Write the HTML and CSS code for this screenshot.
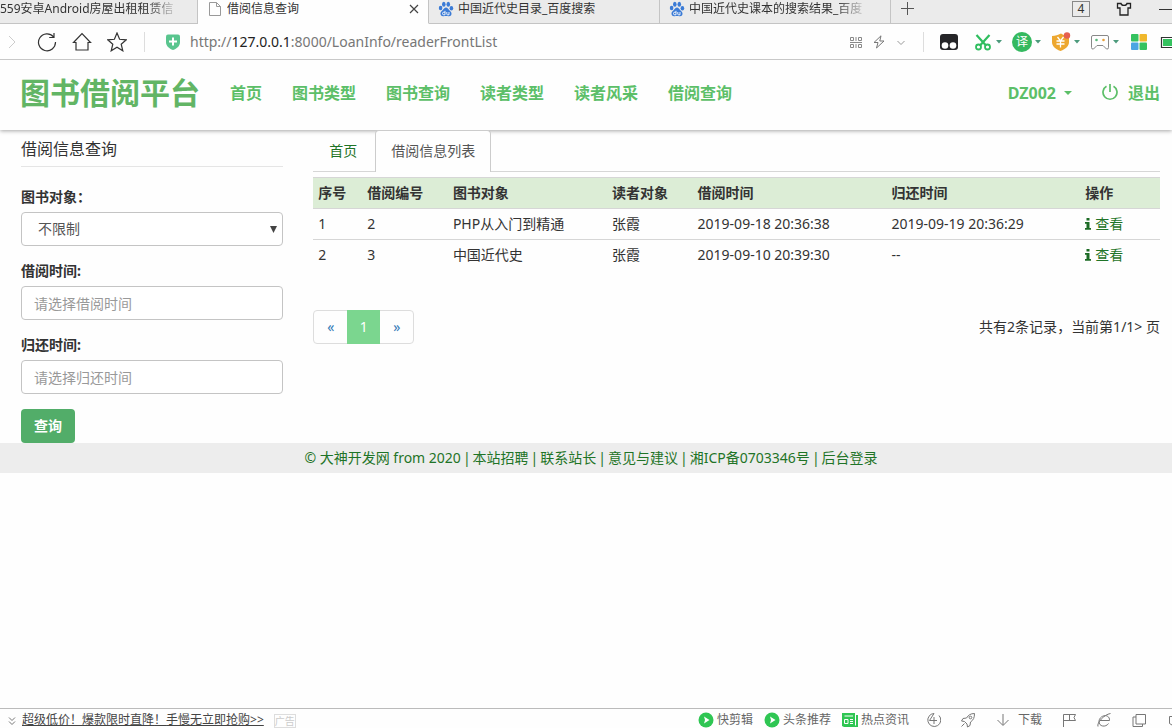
FILE: index.html
```html
<!DOCTYPE html>
<html lang="zh-CN">
<head>
<meta charset="utf-8">
<title>借阅信息查询</title>
<link rel="stylesheet" href="styles.css">
</head>
<body>
<svg class="defs" aria-hidden="true">
  <symbol id="paw" viewBox="0 0 16 16">
    <g fill="#3b7bd6"><ellipse cx="2.6" cy="7" rx="1.8" ry="2.3"/><ellipse cx="5.8" cy="3.3" rx="1.8" ry="2.5"/><ellipse cx="10.3" cy="3.3" rx="1.8" ry="2.5"/><ellipse cx="13.4" cy="7.2" rx="1.8" ry="2.3"/><path d="M8 6.600c-1.700 0-2.200 1.500-3.400 2.700C3.300 10.500 2.300 11.400 2.500 13c.3 1.900 1.700 2.400 3 2.200 1.700-.3 3.300-.3 5 0 1.500.2 2.800-.4 3-2.200.2-1.600-1-2.500-2.200-3.700C10.200 8.100 9.700 6.600 8 6.600z"/></g>
    <path d="M7 9.800v4H5.800a1.300 1.300 0 0 1 0-2.600H7M8.800 11v2.200c0 .4.300.6.700.6H11V11" fill="none" stroke="#fff" stroke-width=".9"/>
  </symbol>
  <symbol id="caret" viewBox="0 0 6 4"><path d="M0 0h6L3 3.500z" fill="#4c9a7c"/></symbol>
  <symbol id="play" viewBox="0 0 16 16"><circle cx="8" cy="8" r="7.500" fill="#2fc653"/><path d="M6 4.500 11.500 8 6 11.500 7 8z" fill="#fff"/></symbol>
  <symbol id="info" viewBox="0 0 6 12"><path d="M1.500 0h3v2.500h-3zM0 4h4.500v6H6v1.800H0V10h1.500V5.700H0z" fill="#1c6b25"/></symbol>
</svg>

<div class="tabstrip">
  <div class="tab tab-first"><span>559安卓Android房屋出租租赁信</span></div>
  <div class="tab tab-current">
    <svg class="i16" viewBox="0 0 16 16"><path d="M2.500 1.500h7l4 4v9h-11zM9.500 1.500v4h4" fill="none" stroke="#999"/></svg>
    <span>借阅信息查询</span>
    <button class="tab-close" aria-label="关闭"><svg width="10" height="10" viewBox="0 0 10 10"><path d="M1 1l8 8M9 1 1 9" stroke="#444" stroke-width="1.200"/></svg></button>
  </div>
  <div class="tab"><svg class="i16"><use href="#paw"/></svg><span>中国近代史目录_百度搜索</span></div>
  <div class="tab tab-fade"><svg class="i16"><use href="#paw"/></svg><span>中国近代史课本的搜索结果_百度</span></div>
  <button class="tab-add" aria-label="新标签"><svg width="14" height="14" viewBox="0 0 14 14"><path d="M6.500 0v13M0 6.500h13" stroke="#555"/></svg></button>
  <div class="window-tools">
    <span class="count">4</span>
    <svg width="16" height="14" viewBox="0 0 16 14"><path d="M5 1.500H1.500v4.500H4v7h8V6h2.500V1.500H11C10.500 4 5.500 4 5 1.500z" fill="none" stroke="#222" stroke-width="1.300"/></svg>
    <svg width="14" height="14" viewBox="0 0 14 14"><path d="M1 7.500h13" stroke="#333"/></svg>
  </div>
</div>

<div class="toolbar">
  <div class="nav-tools">
    <svg class="i20" viewBox="0 0 20 20"><path d="M7 4l6 6-6 6" fill="none" stroke="#ccc"/></svg>
    <svg class="i20" viewBox="0 0 20 20"><path d="M16.500 4.800A8.500 8.500 0 1 0 18.500 10M17 1v4.500h-4.800" fill="none" stroke="#333" stroke-width="1.200"/></svg>
    <svg class="i20" viewBox="0 0 20 20"><path d="M1.500 10.500 10 1.500l8.500 9H16V18H4v-7.500z" fill="none" stroke="#333" stroke-width="1.200"/></svg>
    <svg class="i20" viewBox="0 0 20 20"><path d="M10 1l2.600 6.300 6.700.5-5.100 4.400 1.600 6.600L10 15.200l-5.800 3.600 1.600-6.600L.7 7.800l6.700-.5z" fill="none" stroke="#333" stroke-width="1.200"/></svg>
  </div>
  <span class="divider"></span>
  <svg class="i16" viewBox="0 0 16 16"><path d="M3 .5h10q2 0 2 2V8c0 4-3 6.500-7 8-4-1.500-7-4-7-8V2.500q0-2 2-2z" fill="#59c58e"/><path d="M8 3.500v8M4 7.500h8" stroke="#fff" stroke-width="2"/></svg>
  <div class="address">http://<b>127.0.0.1</b>:8000/LoanInfo/readerFrontList</div>
  <div class="page-tools">
    <svg width="12" height="12" viewBox="0 0 12 12"><path d="M.5 1.500h3v3h-3zM8.500 1.500h3v3h-3zM.5 8.500h3v3h-3zM8.500 8.500h3v3h-3zM6 1v4M0 6.500h12M6 8v4" fill="none" stroke="#888"/></svg>
    <svg width="12" height="14" viewBox="0 0 12 14"><path d="M8 .8 1 7.500h4L3.500 13l7.500-7H6.800z" fill="none" stroke="#777"/></svg>
    <svg width="10" height="10" viewBox="0 0 10 10"><path d="M1.500 4 5 7.500 8.500 4" fill="none" stroke="#999"/></svg>
  </div>
  <span class="divider divider-end"></span>
  <div class="extensions">
    <svg class="i20 ext-first" viewBox="0 0 20 20"><rect x="1" y="2" width="18" height="16" rx="3" fill="#252528"/><circle cx="6" cy="13.500" r="3.300" fill="#fff"/><circle cx="14" cy="13.500" r="3.300" fill="#fff"/></svg>
    <span class="ext"><svg class="i20" viewBox="0 0 20 20"><path d="M3.500 3l9.500 10.500M16.500 3 7 13.500" stroke="#2fbe5f" stroke-width="2.200"/><g fill="none" stroke="#2fbe5f" stroke-width="1.800"><circle cx="5.500" cy="15" r="2.500"/><circle cx="14.500" cy="15" r="2.500"/></g></svg><svg class="caret"><use href="#caret"/></svg></span>
    <span class="ext"><span class="translate">译</span><svg class="caret"><use href="#caret"/></svg></span>
    <span class="ext"><svg class="i20" viewBox="0 0 20 20"><path d="M1 4c3.500 0 6-1 9-2.500C12 3 15 4 18 4v6c0 4-3 7-8.500 9C4 17 1 14 1 10z" fill="#eda72f"/><path d="M6.500 5 9.500 9l3-4M5.500 9h8M5.500 12h8M9.500 9v6.500" fill="none" stroke="#fff" stroke-width="1.300"/><circle cx="16" cy="3.500" r="3.200" fill="#e5604f"/></svg><svg class="caret"><use href="#caret"/></svg></span>
    <span class="ext"><svg class="i20" viewBox="0 0 20 20"><path d="M3 3.500h14q1.500 0 1.500 1.500v10.500q0 2-2 1.500L13 13.500H7L3.500 17q-2 .5-2-1.500V5Q1.500 3.500 3 3.500z" fill="none" stroke="#888"/><circle cx="6.500" cy="8" r="1.300" fill="#58b878"/><circle cx="13.500" cy="8" r="1.300" fill="#e8a13c"/></svg><svg class="caret"><use href="#caret"/></svg></span>
    <svg class="i20" viewBox="0 0 20 20"><rect x="2" y="2" width="7.500" height="7.500" rx="1" fill="#35c25f"/><rect x="10.500" y="2" width="7.500" height="7.500" rx="1" fill="#f0b82c"/><rect x="2" y="10.500" width="7.500" height="7.500" rx="1" fill="#4ba5e2"/><rect x="10.500" y="10.500" width="7.500" height="7.500" rx="1" fill="#35c25f"/></svg>
    <svg width="13" height="20" viewBox="0 0 13 20"><path d="M14 5.500H2.500v10H14" fill="none" stroke="#333" stroke-width="1.200"/><path d="M4 7h9v7H4z" fill="#35c25f"/></svg>
  </div>
</div>

<div class="page">
  <header class="site-header">
    <a class="brand" href="#">图书借阅平台</a>
    <nav class="site-nav">
      <a href="#">首页</a><a href="#">图书类型</a><a href="#">图书查询</a><a href="#">读者类型</a><a href="#">读者风采</a><a href="#">借阅查询</a>
    </nav>
    <nav class="site-nav user-nav">
      <a href="#">DZ002 <svg width="8" height="4" viewBox="0 0 8 4"><path d="M0 0h8L4 4z" fill="currentColor"/></svg></a>
      <a href="#"><svg width="16" height="18" viewBox="0 0 16 18"><path d="M8 0v8M4.500 2.200a7 7 0 1 0 7 0" fill="none" stroke="currentColor" stroke-width="1.700"/></svg>退出</a>
    </nav>
  </header>

  <div class="content">
    <aside class="search">
      <h1>借阅信息查询</h1>
      <form>
        <label for="book">图书对象<span class="punct">：</span></label>
        <div class="select-wrap">
          <select id="book" class="field"><option>不限制</option></select>
          <svg class="select-arrow" viewBox="0 0 7 7"><path d="M0 0h7L3.500 7z" fill="#444"/></svg>
        </div>
        <label for="loan">借阅时间:</label>
        <input id="loan" class="field" type="text" placeholder="请选择借阅时间">
        <label for="back">归还时间:</label>
        <input id="back" class="field" type="text" placeholder="请选择归还时间">
        <button class="submit" type="button">查询</button>
      </form>
    </aside>

    <main class="results">
      <nav class="page-tabs"><a href="#">首页</a><a class="active" href="#">借阅信息列表</a></nav>
      <table>
        <colgroup><col class="c-no"><col class="c-id"><col class="c-book"><col class="c-id"><col class="c-time"><col class="c-time"><col class="c-act"></colgroup>
        <thead><tr><th>序号</th><th>借阅编号</th><th>图书对象</th><th>读者对象</th><th>借阅时间</th><th>归还时间</th><th>操作</th></tr></thead>
        <tbody>
          <tr><td>1</td><td>2</td><td>PHP从入门到精通</td><td>张霞</td><td>2019-09-18 20:36:38</td><td>2019-09-19 20:36:29</td><td><a href="#"><svg class="info"><use href="#info"/></svg>查看</a></td></tr>
          <tr><td>2</td><td>3</td><td>中国近代史</td><td>张霞</td><td>2019-09-10 20:39:30</td><td>--</td><td><a href="#"><svg class="info"><use href="#info"/></svg>查看</a></td></tr>
        </tbody>
      </table>
      <div class="pager-row">
        <nav class="pager"><a href="#">«</a><a class="active" href="#">1</a><a href="#">»</a></nav>
        <p>共有2条记录<span class="punct">，</span>当前第1/1&gt; 页</p>
      </div>
    </main>
  </div>

  <footer class="site-footer"><span>© 大神开发网 from 2020</span><span>|</span><a href="#">本站招聘</a><span>|</span><a href="#">联系站长</a><span>|</span><a href="#">意见与建议</a><span>|</span><a href="#">湘ICP备0703346号</a><span>|</span><a href="#">后台登录</a></footer>
</div>

<div class="statusbar">
  <svg width="8" height="10" viewBox="0 0 8 10"><path d="M1 1.500l3 3 3-3M1 5.500l3 3 3-3" fill="none" stroke="#777"/></svg>
  <a class="promo" href="#">超级低价<span class="punct">！</span>爆款限时直降<span class="punct">！</span>手慢无立即抢购&gt;&gt;</a>
  <span class="ad">广告</span>
  <div class="shortcuts">
    <span><svg class="i16"><use href="#play"/></svg>快剪辑</span>
    <span><svg class="i16"><use href="#play"/></svg>头条推荐</span>
    <span><svg class="i16" viewBox="0 0 16 16"><path d="M0 1h13v2h3v12H2L0 14z" fill="#2fc653"/><path d="M2.500 4h8.500M2.500 7.500h3.500v4H2.500zM8 7.500h3M8 9.500h3M8 11.500h3M13.500 3v10.500" fill="none" stroke="#fff"/></svg>热点资讯</span>
  </div>
  <div class="status-icons">
    <svg class="i16" viewBox="0 0 16 16"><g fill="none" stroke="#777"><path d="M14 3.500A6.500 6.500 0 1 1 9 1.500L4.500 8.500H12"/><path d="M9 5v7"/></g></svg>
    <svg class="i16" viewBox="0 0 16 16"><path d="M14.500 1.500c-4 0-6 1.500-8 4.500L3 6.500 1.500 9l3 .5 2.500 2.500.5 3L10 13.500l.5-3.500c3-2 4-4.500 4-8.500zM4.500 11.500l-3 3" fill="none" stroke="#777"/><circle cx="10.500" cy="5.500" r="1.300" fill="none" stroke="#777"/></svg>
    <span><svg class="i16" viewBox="0 0 16 16"><path d="M8 2v11M2.500 8 8 13.500 13.500 8" fill="none" stroke="#777"/></svg>下载</span>
    <svg class="i16" viewBox="0 0 16 16"><path d="M2.500 15V2.500h12l-1.500 3 1.500 3h-12M8.500 2.500v6" fill="none" stroke="#777"/></svg>
    <svg class="i16" viewBox="0 0 16 16"><path d="M4 8.500h9.500c.5-7-9.500-6-10.500.5-.5 6 7 6.500 9.500 2.500M2 14.500C.5 11 8 2.500 14.500 1.500" fill="none" stroke="#777"/></svg>
    <svg class="i16" viewBox="0 0 16 16"><path d="M5 2.500h9.500V12H5zM5 5H2v9.500h9.500V12" fill="none" stroke="#777"/></svg>
    <svg width="6" height="14" viewBox="0 0 6 14"><path d="M6 3.500H3.500v7L6 12" fill="none" stroke="#777"/></svg>
  </div>
</div>
</body>
</html>
```

FILE: styles.css
```css
* { box-sizing: border-box; }
body {
  margin: 0;
  height: 100vh;
  display: flex;
  flex-direction: column;
  overflow: hidden;
  background: #fefefe;
  color: #333;
  font: 14px/20px "Noto Sans", "Noto Sans CJK SC", sans-serif;
}
a { color: #1f7427; text-decoration: none; }
button { border: 0; background: none; padding: 0; font: inherit; }
svg { flex: none; }
.defs { display: none; }
.i16 { width: 16px; height: 16px; }
.i20 { width: 20px; height: 20px; }
/* Full-width punctuation centred in its cell */
.punct { font-family: "Noto Sans CJK TC", sans-serif; line-height: 1; }

/* Browser tabs */
.tabstrip {
  display: flex;
  flex: none;
  background: #ebebeb;
  font-size: 12px;
  line-height: 18px;
}
.tab {
  display: flex;
  align-items: center;
  gap: 4px;
  flex: 0 1 231px;
  min-width: 0;
  padding: 0 9px 5px;
  border-right: 1px solid #c4c4c4;
  border-bottom: 1px solid #c4c4c4;
  white-space: nowrap;
  overflow: hidden;
}
.tab span { overflow: hidden; }
.tab-first { flex-basis: 198px; padding-left: 0; }
.tab-first span, .tab-fade span {
  mask-image: linear-gradient(to right, #000 85%, rgba(0, 0, 0, .2));
}
.tab-current { background: #fefefe; border-bottom-color: #fefefe; }
.tab-close { display: flex; margin-left: auto; }
.tab-add { padding: 0 10px 5px; line-height: 0; border-bottom: 1px solid #c4c4c4; }
.window-tools {
  display: flex;
  flex: 1;
  justify-content: flex-end;
  align-items: center;
  gap: 26px;
  padding-bottom: 5px;
  border-bottom: 1px solid #c4c4c4;
}
.count { width: 18px; border: 1px solid #888; line-height: 14px; text-align: center; }

/* Browser toolbar */
.toolbar {
  display: flex;
  align-items: center;
  flex: none;
  height: 36px;
  padding-left: 2px;
  border-bottom: 1px solid #c8c8c8;
}
.nav-tools { display: flex; gap: 15px; }
.divider { width: 1px; height: 20px; margin: 0 20px 0 17px; background: #ddd; }
.divider-end { margin: 0 15px 0 17px; }
.address { flex: 1; margin-left: 9px; color: #777; }
.address b { color: #222; font-weight: 400; }
.page-tools { display: flex; align-items: center; gap: 11px; }
.extensions { display: flex; align-items: center; gap: 10px; }
.ext-first { margin-right: 4px; }
.ext { display: flex; align-items: center; gap: 3px; }
.caret { width: 6px; height: 4px; }
.translate {
  width: 20px;
  border-radius: 50%;
  background: #35b960;
  color: #fff;
  font-size: 12px;
  text-align: center;
}

/* Site header */
.page { flex: 1; min-height: 0; overflow: hidden; }
.site-header {
  display: flex;
  align-items: center;
  height: 70px;
  padding: 0 12px 5px 20px;
  box-shadow: 0 1px 4px rgba(0, 0, 0, .35);
}
.brand { margin-right: 30px; color: #62b565; font-size: 30px; font-weight: 700; line-height: 40px; }
.site-nav { display: flex; gap: 30px; font-size: 16px; font-weight: 700; }
.site-nav a { display: flex; align-items: center; gap: 8px; color: #5cbf68; }
.user-nav { margin-left: auto; }
.user-nav a:last-child { gap: 10px; }

.content {
  display: grid;
  grid-template-columns: repeat(12, 1fr);
  column-gap: 30px;
  padding: 0 12px 0 21px;
}

/* Search form */
.search { grid-column: span 3; }
.search h1 {
  margin: 0 0 20px;
  padding: 9px 0 7px;
  border-bottom: 1px solid #e5e5e5;
  font-size: 16px;
  font-weight: 400;
}
.search label { display: block; margin-bottom: 5px; font-weight: 700; }
.field {
  display: block;
  width: 100%;
  height: 34px;
  margin-bottom: 15px;
  padding: 6px 12px;
  border: 1px solid #c4c4c4;
  border-radius: 4px;
  background: #fff;
  color: #555;
  font: inherit;
}
.field::placeholder { color: #999; }
.select-wrap { position: relative; }
.select-wrap .field { appearance: none; padding-left: 16px; }
.select-arrow { position: absolute; top: 14px; right: 6px; width: 7px; height: 7px; pointer-events: none; }
.submit {
  display: block;
  padding: 7px 13px;
  border-radius: 4px;
  background: #52ad69;
  color: #fff;
  font-weight: 700;
}

/* Results */
.results { grid-column: span 9; }
.page-tabs { display: flex; gap: 2px; margin-bottom: 5px; border-bottom: 1px solid #d6d6d6; }
.page-tabs a { padding: 10px 15px; border: 1px solid transparent; border-bottom: 0; }
.page-tabs .active {
  margin-bottom: -1px;
  border-color: #ccc;
  border-radius: 4px 4px 0 0;
  background: #fefefe;
  color: #555;
}
table { width: 100%; table-layout: fixed; border-collapse: collapse; }
th, td { padding: 5px; border-top: 1px solid #d6d6d6; text-align: left; white-space: nowrap; }
th { background: #dcedd6; font-weight: 700; }
.c-no { width: 5.8%; }
.c-id { width: 10.1%; }
.c-book { width: 18.8%; }
.c-time { width: 22.9%; }
.c-act { width: 9.4%; }
td a { display: flex; align-items: center; gap: 4px; }
.info { width: 6px; height: 12px; }
.pager-row { display: flex; justify-content: space-between; align-items: center; margin-top: 40px; }
.pager-row p { margin: 0; }
.pager { display: flex; border: 1px solid #ddd; border-radius: 4px; }
.pager a { width: 33px; padding: 6px 0; color: #337ab7; text-align: center; }
.pager .active { margin: -1px 0; padding: 7px 0; background: #7bd68f; color: #fff; }

.site-footer {
  display: flex;
  flex-wrap: wrap;
  justify-content: center;
  gap: 2px;
  padding: 5px 0 5px 10px;
  background: #ededed;
  color: #1f7427;
}

/* Browser status bar */
.statusbar {
  display: flex;
  align-items: flex-start;
  flex: none;
  height: 20px;
  padding: 2px 0 0 8px;
  border-top: 1px solid #bbb;
  color: #666;
  font-size: 12px;
  line-height: 18px;
}
.statusbar > svg { margin-top: 5px; }
.promo { margin: 0 10px 0 6px; color: #444; text-decoration: underline; }
.ad { margin-top: 3px; border: 1px solid #ddd; color: #ccc; font-size: 10px; line-height: 12px; }
.shortcuts, .status-icons, .shortcuts span, .status-icons span { display: flex; align-items: center; }
.shortcuts { gap: 11px; margin-left: auto; }
.shortcuts span { gap: 3px; }
.status-icons { gap: 19px; margin-left: 16px; }
.status-icons span { gap: 7px; }
```
